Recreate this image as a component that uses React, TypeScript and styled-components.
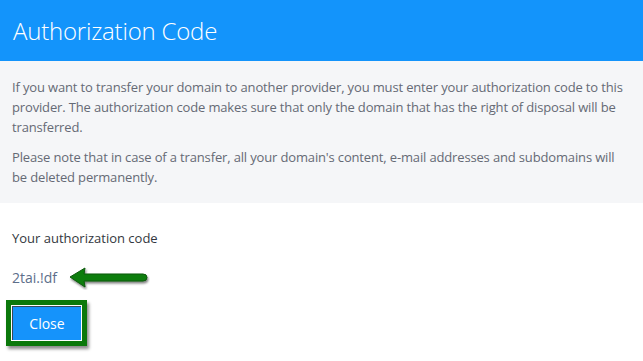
import React from "react";
import styled, { createGlobalStyle } from "styled-components";

const GlobalStyle = createGlobalStyle`
  html, body {
    margin: 0;
    padding: 0;
    background: #ffffff;
    font-family: "Open Sans", "Liberation Sans", sans-serif;
  }
`;

const Page = styled.div`
  width: 643px;
  height: 361px;
  overflow: hidden;
  background: #ffffff;
`;

const Header = styled.div`
  height: 61px;
  background: #1394fb;
  display: flex;
  align-items: center;
  padding: 0 13px;
`;

const Title = styled.h1`
  margin: 0;
  font-size: 24px;
  font-weight: 300;
  color: #ffffff;
  letter-spacing: -0.2px;
`;

const Info = styled.div`
  background: #f5f6f8;
  padding: 16px 12px 16px;
`;

const Paragraph = styled.p`
  margin: 0 0 10px;
  font-size: 13px;
  line-height: 20px;
  color: #656a75;
  letter-spacing: -0.15px;

  &:last-child {
    margin-bottom: 0;
  }
`;

const Body = styled.div`
  padding: 25px 12px 0;
`;

const Label = styled.div`
  font-size: 13px;
  line-height: 20px;
  color: #333740;
`;

const CodeRow = styled.div`
  display: flex;
  align-items: center;
  gap: 11px;
  margin-top: 18px;
`;

const Code = styled.span`
  font-size: 14px;
  line-height: 20px;
  color: #5d6e8a;
`;

const Frame = styled.div`
  display: inline-flex;
  margin: 10px 0 0 -6px;
  border: 5px solid #0b780b;
  box-shadow: 2px 3px 3px rgba(0, 0, 0, 0.45);
  padding: 1px;
  background: #ffffff;
`;

const CloseButton = styled.button`
  width: 69px;
  height: 34px;
  border: none;
  border-top: 1px solid #39465a;
  border-left: 1px solid #39465a;
  background: #1593fb;
  color: #ffffff;
  font-family: "Open Sans", "Liberation Sans", sans-serif;
  font-size: 14px;
  padding: 0;
  cursor: pointer;
`;

function Arrow() {
  return (
    <svg width="82" height="24" viewBox="0 0 82 24">
      <defs>
        <filter id="sh" x="-10%" y="-30%" width="130%" height="170%">
          <feDropShadow dx="1" dy="2" stdDeviation="1.2" floodColor="#000" floodOpacity="0.5" />
        </filter>
      </defs>
      <path
        d="M2 11 L17 2 L16 8 L75 8 Q79 8 79 11.5 Q79 15 75 15 L16 15 L17 21 Z"
        fill="#0d7d0d"
        stroke="#085808"
        strokeWidth="1"
        strokeLinejoin="round"
        filter="url(#sh)"
      />
    </svg>
  );
}

export default function App() {
  return (
    <Page>
      <GlobalStyle />
      <Header>
        <Title>Authorization Code</Title>
      </Header>
      <Info>
        <Paragraph>
          If you want to transfer your domain to another provider, you must
          enter your authorization code to this provider. The authorization code
          makes sure that only the domain that has the right of disposal will be
          transferred.
        </Paragraph>
        <Paragraph>
          Please note that in case of a transfer, all your domain's content,
          e-mail addresses and subdomains will be deleted permanently.
        </Paragraph>
      </Info>
      <Body>
        <Label>Your authorization code</Label>
        <CodeRow>
          <Code>2tai.!df</Code>
          <Arrow />
        </CodeRow>
        <Frame>
          <CloseButton>Close</CloseButton>
        </Frame>
      </Body>
    </Page>
  );
}
